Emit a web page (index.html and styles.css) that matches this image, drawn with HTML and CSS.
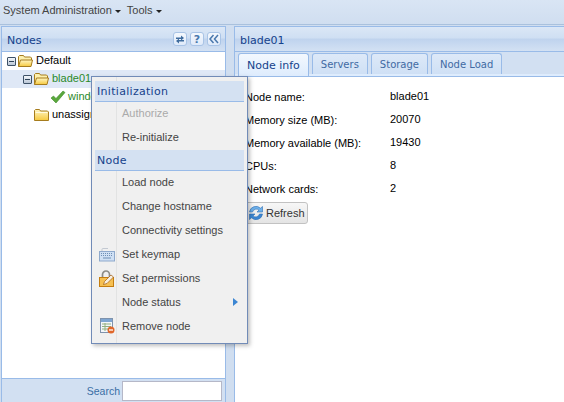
FILE: index.html
```html
<!DOCTYPE html>
<html lang="en">
<head>
    <meta charset="UTF-8">
    <title>Nodes</title>
    <link rel="stylesheet" href="styles.css">
</head>
<body>
    <svg class="defs" width="0" height="0">
        <defs>
            <linearGradient id="gold" x1="0" y1="0" x2="0" y2="1">
                <stop offset="0" stop-color="#fff6c4"/>
                <stop offset="1" stop-color="#f6c93e"/>
            </linearGradient>
            <symbol id="folder-open" viewBox="0 0 15 12">
                <path d="M.5 11.500V1.500l1-1h4l1 1.500h6l1 1v2" fill="#fdf0ae" stroke="#a67c1e"/>
                <path d="M.5 11.500l2-6.500h12l-1.500 6.500z" fill="url(#gold)" stroke="#a67c1e"/>
            </symbol>
            <symbol id="folder-closed" viewBox="0 0 15 12">
                <path d="M.5 11.500V1.500l1-1h4l1 1.500h7l1 1v8.500z" fill="url(#gold)" stroke="#a67c1e"/>
                <path d="M1.500 3.500h12" stroke="#fffbe0"/>
            </symbol>
        </defs>
    </svg>

    <div class="toolbar">
        <span class="tb-item">System Administration<i class="caret"></i></span>
        <span class="tb-item">Tools<i class="caret"></i></span>
    </div>

    <div class="main">
        <div class="panel west">
            <div class="panel-head">
                <span class="panel-title">Nodes</span>
                <span class="tools">
                    <span class="tool">
                        <svg width="10" height="11" viewBox="0 0 10 11"><path d="M1 5V3.500h5V1.500L9 4 6 6.500V5zM9 6v1.500H4v2L1 7l3-2.500V6z" fill="#3f6c9e"/></svg>
                    </span>
                    <span class="tool tool-text">?</span>
                    <span class="tool">
                        <svg width="10" height="10" viewBox="0 0 10 10"><path d="M4.500 1L1 5l3.500 4M9 1L5.500 5 9 9" fill="none" stroke="#4a78ad" stroke-width="1.500"/></svg>
                    </span>
                </span>
            </div>
            <div class="tree">
                <div class="node">
                    <i class="expander"></i>
                    <svg class="folder" width="15" height="12"><use href="#folder-open"/></svg>
                    <span>Default</span>
                </div>
                <div class="node node-sel lvl1">
                    <i class="expander"></i>
                    <svg class="folder" width="15" height="12"><use href="#folder-open"/></svg>
                    <span class="ok">blade01</span>
                </div>
                <div class="node lvl2">
                    <svg class="check" width="16" height="14" viewBox="0 0 16 14"><path d="M1 8l2.500-2 2.500 2.500L13 1l2 1.500L6 13z" fill="#5aa83c" stroke="#3f8a2a" stroke-width=".6"/></svg>
                    <span class="ok">windows</span>
                </div>
                <div class="node lvl3">
                    <svg class="folder" width="15" height="12"><use href="#folder-closed"/></svg>
                    <span>unassigned</span>
                </div>
            </div>
            <div class="search">
                <span>Search</span>
                <input type="text" class="search-box">
            </div>
        </div>

        <div class="panel east">
            <div class="panel-head">
                <span class="panel-title">blade01</span>
            </div>
            <div class="tabs">
                <span class="tab active">Node info</span>
                <span class="tab">Servers</span>
                <span class="tab">Storage</span>
                <span class="tab">Node Load</span>
            </div>
            <div class="tab-body">
                <div class="info">
                    <span>Node name:</span><span class="val">blade01</span>
                    <span>Memory size (MB):</span><span class="val">20070</span>
                    <span>Memory available (MB):</span><span class="val">19430</span>
                    <span>CPUs:</span><span class="val">8</span>
                    <span>Network cards:</span><span class="val">2</span>
                </div>
                <button class="refresh">
                    <svg width="16" height="16" viewBox="0 0 16 16"><path d="M1.500 7a6.500 6.500 0 0 1 11-3.800L14.500 1.500v5.500H9l2-1.900A4 4 0 0 0 4.500 7z" fill="#6db0ea" stroke="#2f6fb4" stroke-width=".6"/><path d="M14.500 9a6.500 6.500 0 0 1-11 3.800L1.500 14.500V9H7l-2 1.900A4 4 0 0 0 11.500 9z" fill="#3c86d2" stroke="#2f6fb4" stroke-width=".6"/></svg>
                    Refresh
                </button>
            </div>
        </div>
    </div>

    <div class="menu">
        <div class="menu-head">Initialization</div>
        <div class="menu-item disabled"><span class="menu-icon"></span>Authorize</div>
        <div class="menu-item"><span class="menu-icon"></span>Re-initialize</div>
        <div class="menu-head">Node</div>
        <div class="menu-item"><span class="menu-icon"></span>Load node</div>
        <div class="menu-item"><span class="menu-icon"></span>Change hostname</div>
        <div class="menu-item"><span class="menu-icon"></span>Connectivity settings</div>
        <div class="menu-item">
            <span class="menu-icon">
                <svg width="16" height="15" viewBox="0 0 16 15"><path d="M3 4V2.500q0-1 1-1h5" fill="none" stroke="#c3c9d2"/><rect x=".5" y="4.500" width="15" height="9.500" fill="#cfe0f4" stroke="#8ea9cc"/><path d="M2 6.500h12M2 8.500h12" stroke="#6f8fb4" stroke-dasharray="1 1"/><path d="M4 11h8" stroke="#6f8fb4"/></svg>
            </span>
            Set keymap
        </div>
        <div class="menu-item">
            <span class="menu-icon">
                <svg width="16" height="17" viewBox="0 0 16 17"><path d="M3.500 7V4.500a3.500 3.500 0 0 1 7 0V7" fill="none" stroke="#8b8b86" stroke-width="1.700"/><rect x=".5" y="7.500" width="14" height="9" fill="#f6c052" stroke="#c47d10"/><path d="M4.500 14.500l1-3 6.500-6.500 2.500 2-6.500 6.500z" fill="#f7efe0" stroke="#a05a10" stroke-width=".7"/></svg>
            </span>
            Set permissions
        </div>
        <div class="menu-item">
            <span class="menu-icon"></span>Node status
            <i class="arrow"></i>
        </div>
        <div class="menu-item">
            <span class="menu-icon">
                <svg width="16" height="16" viewBox="0 0 16 16"><rect x="1.500" y=".5" width="12" height="14" fill="#f3f6fa" stroke="#7f93ad"/><path d="M2 1h11v3H2z" fill="#7fa6d2"/><path d="M3 6h9M3 8.500h9M3 11h9M6 5v8" stroke="#93b07f"/><circle cx="12" cy="12" r="3.500" fill="#e0672a"/><path d="M10 12h4" stroke="#fff" stroke-width="1.300"/></svg>
            </span>
            Remove node
        </div>
    </div>
</body>
</html>
```

FILE: styles.css
```css
html, body {
    margin: 0;
    height: 100%;
    overflow: hidden;
}

body {
    display: flex;
    flex-direction: column;
    font-family: "Liberation Sans", sans-serif;
    font-size: 11px;
    color: #000;
    background-color: #d0def0;
}

.defs {
    position: absolute;
}

.toolbar {
    height: 25px;
    flex: none;
    display: flex;
    align-items: center;
    gap: 6px;
    padding: 0 3px 4px;
    box-sizing: border-box;
    color: #444;
    background: linear-gradient(#d9e5f4, #d0def0);
    border-bottom: 1px solid #a9c1dd;
}

.tb-item {
    display: inline-flex;
    align-items: center;
}

.caret {
    width: 0;
    height: 0;
    margin: 2px 0 0 3px;
    border: 3px solid transparent;
    border-top-color: #222;
    border-bottom: none;
}

.main {
    flex: 1;
    display: flex;
    padding: 1px 0 0 1px;
    gap: 8px;
    min-height: 0;
}

.panel {
    display: flex;
    flex-direction: column;
    border: 1px solid #99bbe8;
    border-bottom: none;
    box-sizing: border-box;
}

.west {
    width: 225px;
}

.east {
    flex: 1;
    border-right: none;
}

.panel-head {
    height: 25px;
    flex: none;
    display: flex;
    align-items: center;
    justify-content: space-between;
    padding: 0 4px 0 5px;
    box-sizing: border-box;
    background: linear-gradient(#dbe7f6 0, #cfdff3 46%, #bfd3ee 50%, #d3e1f3 100%);
    border-bottom: 1px solid #99bbe8;
}

.panel-title {
    padding-top: 2px;
    font-family: "DejaVu Sans", sans-serif;
    font-size: 11px;
    color: #15428b;
}

.tools {
    display: flex;
    gap: 3px;
}

.tool {
    width: 14px;
    height: 14px;
    box-sizing: border-box;
    display: flex;
    align-items: center;
    justify-content: center;
    border: 1px solid #a9c4e6;
    border-radius: 3px;
    background: linear-gradient(#f4f8fd, #dfeafa);
}

.tool-text {
    font-family: "DejaVu Sans", sans-serif;
    font-size: 11px;
    font-weight: bold;
    color: #4a78ad;
}

.tree {
    flex: 1;
    background-color: #fff;
}

.node {
    height: 18px;
    display: flex;
    align-items: center;
    gap: 2px;
    padding-left: 5px;
}

.node span {
    margin-bottom: 2px;
}

.lvl1 {
    padding-left: 21px;
}

.lvl2 {
    padding-left: 48px;
}

.lvl3 {
    padding-left: 32px;
}

.node-sel {
    background-color: #dfe8f6;
}

.ok {
    color: #2a8a2a;
}

.expander {
    width: 7px;
    height: 7px;
    flex: none;
    border: 1px solid #3e5268;
    border-radius: 1px;
    background: linear-gradient(#2f4358, #2f4358) center / 5px 1px no-repeat, linear-gradient(#f4f7fb, #b9c6d6);
}

.folder {
    flex: none;
    margin-right: 1px;
}

.check {
    flex: none;
}

.search {
    height: 24px;
    flex: none;
    display: flex;
    align-items: center;
    justify-content: flex-end;
    gap: 2px;
    padding-right: 3px;
    font-size: 10.500px;
    color: #3a6ea5;
    background-color: #d2e0f2;
    border-top: 1px solid #99bbe8;
    box-sizing: border-box;
}

.search-box {
    width: 100px;
    height: 20px;
    padding: 0;
    box-sizing: border-box;
    border: 1px solid #b5b8c8;
    background-color: #fff;
}

.tabs {
    height: 25px;
    flex: none;
    display: flex;
    align-items: stretch;
    gap: 3px;
    padding: 1px 0 2px 3px;
    background: linear-gradient(#d2e0f2 22px, #deecfd 22px);
    border-bottom: 1px solid #99bbe8;
    box-sizing: border-box;
}

.tab {
    display: flex;
    align-items: center;
    padding: 0 8px;
    font-family: "DejaVu Sans", sans-serif;
    font-size: 10px;
    color: #416aa3;
    background: linear-gradient(#dde9f8, #cfe0f5);
    border: 1px solid #99bbe8;
    border-bottom: none;
    border-radius: 3px 3px 0 0;
}

.tab.active {
    margin-bottom: -2px;
    font-size: 11px;
    color: #15428b;
    background: linear-gradient(#f3f8fe, #deecfd);
}

.tab-body {
    flex: 1;
    background-color: #fff;
    padding: 14px 0 0 10px;
}

.info {
    display: grid;
    grid-template-columns: 145px auto;
    grid-template-rows: repeat(4, 23px) 19px;
}

.val {
    margin-top: -1px;
}

.refresh {
    display: flex;
    align-items: center;
    gap: 2px;
    height: 22px;
    padding: 0 2px;
    font-family: "Liberation Sans", sans-serif;
    font-size: 11px;
    color: #333;
    border: 1px solid #c2c2c2;
    border-radius: 3px;
    background: linear-gradient(#f7f7f7, #e4e4e4);
}

/* floats over the tree and the tab body */
.menu {
    position: absolute;
    left: 91px;
    top: 76px;
    width: 157px;
    height: 268px;
    padding: 4px 3px 0 3px;
    box-sizing: border-box;
    background-color: #f0f0f0;
    border: 1px solid #718bb7;
    box-shadow: 2px 2px 4px rgba(0, 0, 0, 0.25);
}

.menu::before {
    content: "";
    position: absolute;
    left: 24px;
    top: 0;
    bottom: 0;
    width: 1px;
    background-color: #e2e3e3;
}

.menu-head {
    position: relative;
    height: 20px;
    display: flex;
    align-items: center;
    padding-left: 2px;
    font-family: "DejaVu Sans", sans-serif;
    font-size: 11px;
    letter-spacing: 0.300px;
    color: #15428b;
    background-color: #d4e1f2;
    border-bottom: 1px solid #99bbe8;
}

.menu-item {
    position: relative;
    height: 24px;
    padding-bottom: 2px;
    box-sizing: border-box;
    display: flex;
    align-items: center;
    color: #444;
}

.menu-item.disabled {
    color: #aaa;
}

.menu-icon {
    width: 27px;
    flex: none;
    display: flex;
    align-items: center;
    justify-content: center;
    padding-right: 3px;
    box-sizing: border-box;
}

.arrow {
    position: absolute;
    right: 6px;
    top: 7px;
    border: 4px solid transparent;
    border-left: 5px solid #3c86d2;
    border-right: none;
}
```
